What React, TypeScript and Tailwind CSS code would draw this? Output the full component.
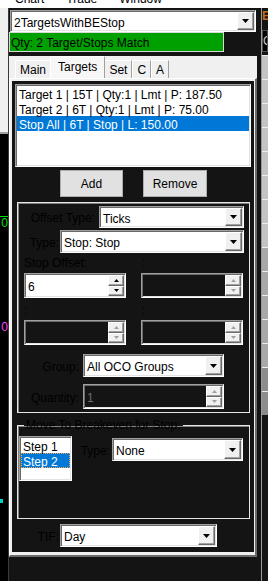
import React from 'react';

const SUNKEN =
  'border border-t-[#a0a0a0] border-l-[#a0a0a0] border-r-white border-b-white shadow-[inset_1px_1px_0_#696969,inset_-1px_-1px_0_#e3e3e3]';
const RAISED =
  'border border-t-white border-l-white border-r-[#696969] border-b-[#696969] shadow-[inset_-1px_-1px_0_#a0a0a0]';

function DownArrow() {
  return (
    <svg width="7" height="4" viewBox="0 0 7 4">
      <path d="M0 0h7L3.5 4z" fill="#000" />
    </svg>
  );
}

function Combo({ text, className }: { text: string; className: string }) {
  return (
    <div className={`flex bg-white ${SUNKEN} ${className}`}>
      <div className="flex-1 flex items-center pl-[3px] pt-[3px] text-black whitespace-nowrap overflow-hidden">{text}</div>
      <div className={`w-[17px] my-[1px] mr-[1px] flex items-center justify-center bg-[#f0f0f0] ${RAISED}`}>
        <DownArrow />
      </div>
    </div>
  );
}

function SpinBtn({ up, disabled }: { up: boolean; disabled?: boolean }) {
  return (
    <div className={`flex-1 flex items-center justify-center bg-[#f0f0f0] ${RAISED}`}>
      <svg width="5" height="3" viewBox="0 0 5 3">
        <path d={up ? 'M2.5 0L5 3H0z' : 'M0 0h5L2.5 3z'} fill={disabled ? '#a0a0a0' : '#000'} />
      </svg>
    </div>
  );
}

function Spin({ value, disabled, className }: { value?: string; disabled?: boolean; className: string }) {
  return (
    <div className={`flex h-[25px] ${disabled ? 'bg-[#141414]' : 'bg-white'} ${SUNKEN} ${className}`}>
      <div className={`flex-1 flex items-center pl-[3px] pt-[3px] ${disabled ? 'text-[#6d6d6d]' : 'text-black'}`}>
        {value}
      </div>
      <div className="w-[16px] my-[1px] mr-[1px] flex flex-col">
        <SpinBtn up disabled={disabled} />
        <SpinBtn up={false} disabled={disabled} />
      </div>
    </div>
  );
}

function Tab({ label, selected }: { label: string; selected?: boolean }) {
  return (
    <div
      className={`border-l border-t border-l-white border-t-white border-r border-r-[#a0a0a0] bg-[#f0f0f0] leading-[12px] text-black ${
        selected ? 'h-[22px] px-[7px] pt-[4px] -mx-[1px] z-10 bg-[#f7f7f7]' : 'h-[18px] px-[4px] pt-[3px]'
      }`}
    >
      {label}
    </div>
  );
}

const targets = [
  'Target 1 | 15T | Qty:1 | Lmt | P: 187.50',
  'Target 2 | 6T | Qty:1 | Lmt | P: 75.00',
  'Stop All | 6T | Stop | L: 150.00',
];

export default function App() {
  return (
    <div className="w-[268px] h-[581px] overflow-hidden bg-[#141414] text-[12px] font-[family-name:Liberation_Sans,Arial,sans-serif] flex flex-col">
      {/* menu strip, cut off at the top */}
      <div className="h-[8px] bg-white overflow-hidden shrink-0">
        <div className="mt-[-7px] leading-[12px] flex text-black">
          <span className="ml-[15px]">Chart</span>
          <span className="ml-[22px]">Trade</span>
          <span className="ml-[22px]">Window</span>
        </div>
      </div>

      <div className="flex flex-1">
        {/* left background strip */}
        <div className="w-[9px] flex flex-col border-r border-[#3a3a3a]">
          <div className="h-[126px] bg-[#f0f0f0] border-b-2 border-[#a0a0a0]" />
          <div className="flex-1 bg-black overflow-hidden leading-[12px]">
            <div className="mt-[82px] border-t border-[#00e000] text-[#00e000] text-right">0</div>
            <div className="mt-[92px] text-[#ff40ff] text-right">0</div>
            <div className="mt-[166px] h-[4px] w-[3px] bg-[#00d0c0]" />
          </div>
        </div>

        {/* main dialog column */}
        <div className="w-[248px] flex flex-col">
          <Combo text="2TargetsWithBEStop" className="mt-[2px] ml-[1px] w-[246px] h-[22px]" />
          <div className="w-[215px] h-[20px] bg-[#00a000] border border-[#d8d8d8] pl-[1px] pt-[2px] flex items-center text-black whitespace-nowrap">
            Qty: 2 Target/Stops Match
          </div>

          {/* tab strip */}
          <div className="mt-[4px] h-[22px] bg-[#f0f0f0] flex items-end pl-[6px]">
            <Tab label="Main" />
            <Tab label="Targets" selected />
            <Tab label="Set" />
            <Tab label="C" />
            <Tab label="A" />
          </div>

          {/* tab page */}
          <div className="h-[479px] bg-[#f0f0f0] border-l border-t border-white border-r-2 border-b-2 border-r-[#6b6b6b] border-b-[#6b6b6b] pl-[2px] pt-[2px] pr-[1px] pb-[3px] flex">
            <div className="flex-1 bg-[#141414] flex flex-col">
              {/* targets list */}
              <div className={`mt-[3px] mx-[3px] h-[83px] bg-white ${SUNKEN} p-[1px] pt-[1px]`}>
                {targets.map((t, i) => (
                  <div
                    key={t}
                    className={`h-[15px] pl-[2px] pt-[2px] leading-[14px] whitespace-nowrap ${
                      i === 2 ? 'bg-[#0078d7] text-white' : 'text-black'
                    }`}
                  >
                    {t}
                  </div>
                ))}
              </div>

              <div className="mt-[3px] flex pl-[48px] gap-[20px]">
                <button className="w-[63px] h-[27px] bg-[#e1e1e1] border border-[#adadad] text-black pt-[1px]">Add</button>
                <button className="w-[64px] h-[27px] bg-[#e1e1e1] border border-[#adadad] text-black pt-[1px]">Remove</button>
              </div>

              {/* stop settings frame */}
              <div className="mt-[5px] ml-[5px] w-[233px] border border-[#e6e6e6] shadow-[inset_1px_1px_0_#808080] flex flex-col">
                <div className="mt-[3px] flex items-center h-[22px]">
                  <div className="w-[77px] text-right text-black pt-[2px]">Offset Type:</div>
                  <Combo text="Ticks" className="ml-[4px] w-[145px] h-[22px]" />
                </div>
                <div className="mt-[2px] flex items-center h-[23px]">
                  <div className="w-[41px] text-right text-black pt-[2px]">Type:</div>
                  <Combo text="Stop: Stop" className="ml-[1px] w-[184px] h-[23px]" />
                </div>
                <div className="mt-[4px] h-[16px] flex leading-[12px] text-black pl-[6px]">
                  <div className="w-[118px]">Stop Offset:</div>
                  <div>:</div>
                </div>
                <div className="flex pl-[6px] gap-[15px]">
                  <Spin value="6" className="w-[102px]" />
                  <Spin disabled className="w-[102px]" />
                </div>
                <div className="mt-[6px] h-[16px] flex leading-[12px] text-black pl-[6px]">
                  <div className="w-[118px]">:</div>
                  <div>:</div>
                </div>
                <div className="flex pl-[6px] gap-[15px]">
                  <Spin disabled className="w-[102px]" />
                  <Spin disabled className="w-[102px]" />
                </div>
                <div className="mt-[9px] flex items-center h-[23px]">
                  <div className="w-[61px] text-right text-black pt-[2px]">Group:</div>
                  <Combo text="All OCO Groups" className="ml-[4px] w-[141px] h-[23px]" />
                </div>
                <div className="mt-[7px] mb-[3px] flex items-center">
                  <div className="w-[61px] text-right text-black pt-[2px]">Quantity:</div>
                  <Spin value="1" disabled className="ml-[4px] w-[141px]" />
                </div>
              </div>

              {/* breakeven group */}
              <fieldset className="mt-[6px] ml-[5px] w-[233px] h-[100px] border border-[#e6e6e6] shadow-[inset_1px_1px_0_#808080]">
                <legend className="ml-[6px] px-[2px] leading-[13px] text-black">Move To Breakeven for Stop:</legend>
                <div className="flex mt-[4px]">
                  <div className={`ml-[1px] w-[53px] h-[45px] bg-white ${SUNKEN} p-[1px]`}>
                    <div className="h-[15px] pl-[2px] pt-[2px] leading-[14px] text-black">Step 1</div>
                    <div className="h-[15px] pl-[1px] pt-[1px] leading-[14px] bg-[#0078d7] text-white border border-dotted border-[#f0a850]">
                      Step 2
                    </div>
                  </div>
                  <div className="ml-[7px] mt-[2px] flex items-center h-[23px]">
                    <div className="w-[31px] text-right text-black pt-[2px]">Type:</div>
                    <Combo text="None" className="ml-[2px] w-[131px] h-[23px]" />
                  </div>
                </div>
              </fieldset>

              <div className="mt-[5px] flex items-center h-[23px]">
                <div className="w-[47px] text-right text-black pt-[2px]">TIF:</div>
                <Combo text="Day" className="ml-[1px] w-[157px] h-[23px]" />
              </div>
            </div>
          </div>
        </div>

        <div className="w-[4px]" />

        {/* right background strip */}
        <div className="w-[7px] flex flex-col border-l border-[#9a9a9a]">
          <div className="h-[22px] overflow-hidden leading-[12px] pt-[2px] text-[#c86a1c] font-bold">E</div>
          <div className="h-[22px] bg-black border border-[#505050] text-[#c8c8c8] leading-[12px] pt-[4px] overflow-hidden">C</div>
          <div className="mt-[3px] flex-1 flex flex-col">
            {Array.from({ length: 15 }).map((_, i) => (
              <div
                key={i}
                className={`h-[24px] border-t border-[#eeeeee] ${i > 12 ? 'bg-[#8c8c8c]' : i > 7 ? 'bg-[#a8a8a8]' : 'bg-[#c4c4c4]'}`}
              />
            ))}
          </div>
        </div>
      </div>
    </div>
  );
}
